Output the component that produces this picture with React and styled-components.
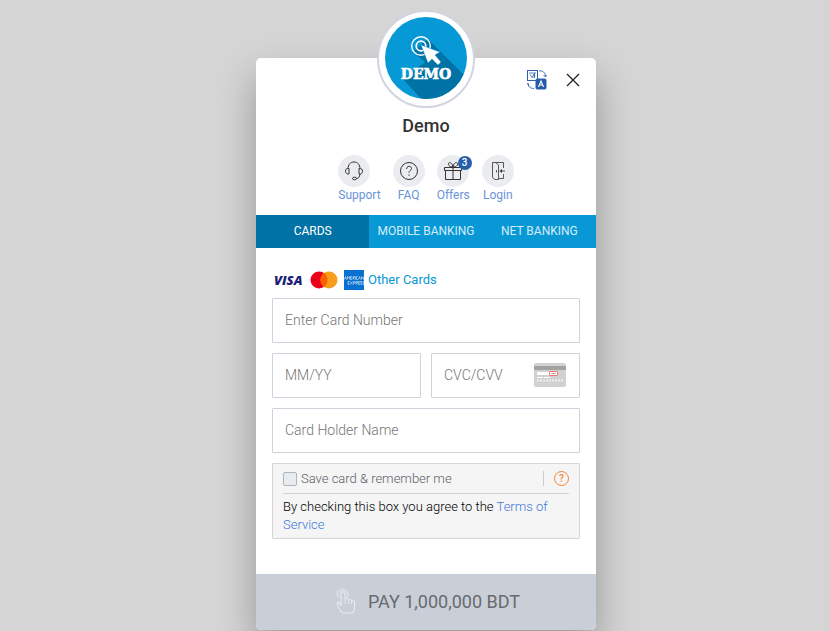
import React from 'react';
import styled, { createGlobalStyle } from 'styled-components';

const GlobalStyle = createGlobalStyle`
  *, *::before, *::after { box-sizing: border-box; }
  html { background: #d5d5d5; }
  body {
    margin: 0;
    font-family: Roboto, "Liberation Sans", sans-serif;
    font-size: 13px;
    color: #333;
    overflow-x: hidden;
  }
  button, input { font-family: inherit; }
`;

const Page = styled.main`
  display: flex;
  justify-content: center;
  padding: 58px 0 1px 22px;
`;

const Card = styled.form`
  position: relative;
  width: 100%;
  max-width: 340px;
  height: fit-content;
  background: #fff;
  border-radius: 5px;
  box-shadow: 0 19px 38px rgba(0, 0, 0, 0.3);
`;

const Brand = styled.div`
  position: absolute;
  top: -48px;
  left: 50%;
  transform: translateX(-50%);
  width: 98px;
  height: 98px;
  padding: 5px 6px;
  border: 2px solid #d1d5e0;
  border-radius: 50%;
  background: #fff;

  svg { display: block; }
`;

const Header = styled.header`
  display: flex;
  flex-direction: column;
  align-items: center;
  padding: 11px 12px 12px;
`;

const TopTools = styled.div`
  display: flex;
  align-self: stretch;
  justify-content: flex-end;
  gap: 14px;
`;

const ToolButton = styled.button`
  display: flex;
  width: 22px;
  height: 22px;
  padding: 0;
  align-items: center;
  justify-content: center;
  border: 0;
  background: none;
  color: #222;
  cursor: pointer;
`;

const Title = styled.h1`
  margin: 24px 0 18px;
  font-size: 18px;
  line-height: 22px;
  font-weight: 500;
`;

const Actions = styled.nav`
  display: flex;
  gap: 12px;
`;

const Action = styled.a`
  display: flex;
  flex-direction: column;
  align-items: ${(p) => (p.$start ? 'flex-start' : 'center')};
  color: #6a93d8;
  font-size: 12px;
  line-height: 16px;
  text-decoration: none;
`;

const ActionIcon = styled.span`
  position: relative;
  display: flex;
  width: 32px;
  height: 32px;
  align-items: center;
  justify-content: center;
  border-radius: 50%;
  background: #ebecf0;
  color: #333;
`;

const Badge = styled.span`
  position: absolute;
  top: 1px;
  right: -3px;
  width: 14px;
  height: 14px;
  border-radius: 50%;
  background: #275eaa;
  color: #fff;
  font-size: 10px;
  line-height: 14px;
  font-weight: 500;
  text-align: center;
`;

const Tabs = styled.div`
  display: grid;
  grid-template-columns: repeat(3, 1fr);
  background: #0798d5;
`;

const Tab = styled.button`
  height: 33px;
  padding: 0 0 2px;
  border: 0;
  background: ${(p) => (p.$active ? '#0072a5' : 'transparent')};
  color: ${(p) => (p.$active ? '#fff' : '#d4eefa')};
  font-size: 12px;
  white-space: nowrap;
  cursor: pointer;
`;

const Body = styled.div`
  display: flex;
  flex-direction: column;
  gap: 10px;
  padding: 22px 16px 35px;
`;

const CardTypes = styled.div`
  display: flex;
  align-items: center;
  height: 20px;
  margin-bottom: -2px;
  gap: 4px;
`;

const OtherCards = styled.a`
  padding-bottom: 2px;
  color: #0798d5;
  text-decoration: none;
`;

const FieldRow = styled.div`
  display: grid;
  grid-template-columns: repeat(2, minmax(0, 1fr));
  gap: 10px;
`;

const Field = styled.label`
  display: flex;
  align-items: center;
  height: 45px;
  padding: 0 12px 2px;
  border: 1px solid #ced2da;
  border-radius: 1px;
  background: #fff;

  svg { flex: none; }
`;

const Input = styled.input`
  flex: 1;
  min-width: 0;
  padding: 0;
  border: 0;
  outline: 0;
  background: transparent;
  color: #333;
  font-size: 14px;
  font-weight: 300;

  &::placeholder { color: #757575; opacity: 1; }
`;

const Consent = styled.section`
  padding: 0 10px 4px;
  border: 1px solid #d5d5d5;
  border-radius: 1px;
  background: #f5f5f5;
  font-weight: 300;
`;

const SaveRow = styled.div`
  display: flex;
  align-items: center;
  height: 30px;
  border-bottom: 1px solid #d2d2d2;
`;

const SaveLabel = styled.label`
  display: flex;
  flex: 1;
  align-items: center;
  gap: 4px;
  color: #5a6268;
`;

const CheckBox = styled.input`
  appearance: none;
  width: 14px;
  height: 14px;
  margin: 0;
  border: 1px solid #adb5bd;
  border-radius: 2px;
  background: #e9ecef;

  &:checked { background: #0798d5; }
`;

const HelpWrap = styled.div`
  padding-left: 10px;
  border-left: 1px solid #ccc;
`;

const HelpButton = styled.button`
  display: block;
  width: 15px;
  height: 15px;
  padding: 0;
  border: 1px solid #f58634;
  border-radius: 50%;
  background: none;
  color: #f58634;
  font-size: 10px;
  line-height: 13px;
  font-weight: 500;
  text-align: center;
  cursor: pointer;
`;

const Terms = styled.p`
  margin: 4px 0 0;
  color: #000;
  line-height: 18px;

  a { color: #3f78d8; text-decoration: none; }
`;

const PayButton = styled.button`
  display: flex;
  width: 100%;
  height: 56px;
  align-items: center;
  justify-content: center;
  gap: 12px;
  padding: 0 0 2px 4px;
  border: 0;
  border-radius: 0 0 5px 5px;
  background: #cacfd7;
  color: #666b70;
  font-size: 18px;
  cursor: pointer;
`;

function DemoLogo() {
  return (
    <svg width="82" height="82" viewBox="0 0 82 82" role="img" aria-label="Demo">
      <defs>
        <clipPath id="disc"><circle cx="41" cy="41" r="41" /></clipPath>
      </defs>
      <g clipPath="url(#disc)">
        <rect width="82" height="82" fill="#0799d6" />
        <path d="M43 22 98 77 60 108 18 62 40 45 28 35Z" fill="#0072a5" />
      </g>
      <g fill="none" stroke="#fff">
        <circle cx="36" cy="29" r="9.3" strokeWidth="1.4" />
        <circle cx="36" cy="29" r="4.8" strokeWidth="1.7" />
      </g>
      <path d="M36 28 55 35 50 38 56 45 53 48 47 42 43 46Z" fill="#fff" stroke="#0799d6" strokeWidth="0.500" />
      <text x="41" y="62" fill="#fff" stroke="#fff" strokeWidth="0.600" textAnchor="middle" fontFamily="DejaVu Serif, serif" fontWeight="700" fontSize="14">DEMO</text>
    </svg>
  );
}

function TranslateIcon() {
  return (
    <svg width="20" height="20" viewBox="0 0 20 20" fill="none" stroke="#2d61ad">
      <rect x="0.500" y="0.500" width="10" height="10" />
      <path d="M2 3h7M3 4.500l2 3 1.500-2.500M6 4.500c3-.5 2 3 0 2.500M7.500 3v5" strokeWidth="0.800" />
      <path d="M12 1c4-.5 6 1.500 6.500 5m-2-1 2 2 1-2M1 13c0 3 2 5.500 6 5.500m-5-2L.5 13" strokeWidth="0.900" />
      <rect x="9" y="9" width="10" height="10" rx="1" fill="#205bab" />
      <path d="m11.500 17 2.500-6 2.500 6m-4-2h3" stroke="#fff" strokeWidth="1.100" />
    </svg>
  );
}

function CloseIcon() {
  return (
    <svg width="14" height="14" viewBox="0 0 14 14" stroke="currentColor" strokeWidth="1.300">
      <path d="m1 1 12 12M13 1 1 13" />
    </svg>
  );
}

const line = { width: 20, height: 20, viewBox: '0 0 20 20', fill: 'none', stroke: 'currentColor', strokeWidth: 1 };

function HeadsetIcon() {
  return (
    <svg {...line}>
      <path d="M4 8C4 3.500 6.500 1 10 1S16 3.500 16 8M5 7.500c-2.500-.5-3.500 1-3.500 2.800S3 13.500 5 13Zm10 0c2.500-.5 3.500 1 3.500 2.800S17 13.500 15 13ZM16 13c-.5 3-1.500 4.500-3.500 4.500" />
      <ellipse cx="10.500" cy="17.500" rx="2" ry="1.300" />
    </svg>
  );
}

function FaqIcon() {
  return (
    <svg {...line}>
      <circle cx="10" cy="10" r="8.500" />
      <path d="M7.500 8c0-3.500 5-3.500 5-.5 0 2-2.500 2-2.500 4.200" />
      <path d="M10 13.500v1.300" />
    </svg>
  );
}

function GiftIcon() {
  return (
    <svg {...line}>
      <path d="M1.500 6.500h17v3h-17ZM2.500 9.500v9h15v-9M10 6.500v12M10 6C7 6 5 4.500 5.500 2.500 6.500.5 9.500 2 10 6Zm0 0c3 0 5-1.500 4.500-3.500C13.500.5 10.500 2 10 6Z" />
    </svg>
  );
}

function LoginIcon() {
  return (
    <svg {...line} strokeWidth="0.800">
      <path d="M4.500 1.500h11V7m0 6v4.500H10.500M4.500 1.500v15l2.500 2h3.500V4L7.500 1.500M8.500 9v2.500" />
      <path d="M17 10h-4.500" />
      <path d="m14 8-2.500 2 2.500 2Z" fill="currentColor" stroke="none" />
    </svg>
  );
}

function VisaIcon() {
  return (
    <svg width="33" height="20" viewBox="0 0 33 20" role="img" aria-label="Visa">
      <text x="2" y="15" fill="#1c2177" fontFamily="Open Sans, sans-serif" fontSize="13" fontStyle="italic" fontWeight="800">VISA</text>
    </svg>
  );
}

function MastercardIcon() {
  return (
    <svg width="31" height="18" viewBox="0 0 31 18" role="img" aria-label="Mastercard">
      <circle cx="10" cy="9" r="8.500" fill="#eb001b" />
      <circle cx="20" cy="9" r="8.500" fill="#f79e1b" />
      <path d="M15 2.100a8.500 8.500 0 0 1 0 13.800 8.500 8.500 0 0 1 0-13.800Z" fill="#ff5f00" />
    </svg>
  );
}

function AmexIcon() {
  return (
    <svg width="20" height="20" viewBox="0 0 20 20" role="img" aria-label="American Express">
      <rect width="20" height="20" fill="#0870cf" />
      <g stroke="#d6e8f8" strokeWidth="0.600" fill="none">
        <path d="M.5 9.500 1.500 6.500 2.500 9.500M1 8.500h1M3.500 9.500v-3l1 1.500 1-1.500v3M8 6.500H6.500v3H8M6.500 8H8M9 9.500v-3h1.500V8H9l1.500 1.500M11.500 6.500v3M14 6.500h-1.500v3H14M14.500 9.500l1-3 1 3M17.500 9.500v-3l2 3v-3" />
        <path d="M5.500 11.500H4v3h1.500M4 13h1.500M6.500 11.500l2 3m0-3-2 3M9.500 14.500v-3H11V13H9.500M12 14.500v-3h1.500V13H12l1.500 1.500M16 11.500h-1.500v3H16m-1.500-1.500H16M18 11.500h-1.500V13H18v1.500h-1.500M20 11.500h-1V13h1v1.500h-1" />
      </g>
    </svg>
  );
}

function CvvIcon() {
  return (
    <svg width="33" height="24" viewBox="0 0 33 24" aria-hidden="true">
      <rect width="32" height="24" rx="2" fill="#d0d2d1" />
      <rect y="3" width="32" height="4" fill="#a2a2a1" />
      <rect x="3" y="9" width="13" height="3" fill="#fff" />
      <rect x="15.500" y="8.500" width="8" height="4" rx="0.500" fill="#fff" stroke="#ef7772" />
      <path d="M17.500 10.500h4" stroke="#777" strokeDasharray="1 .5" />
      <path d="M3 14.500h6m1 0h6" stroke="#fff" />
      <path d="M3 17.500h26" stroke="#eee" strokeWidth="2" strokeDasharray="2 1" />
    </svg>
  );
}

function TapIcon() {
  return (
    <svg width="20" height="26" viewBox="0 0 20 26" fill="none" stroke="#e8eaed" strokeWidth="1.100">
      <path d="M5 17 2.500 14.500c-1.500-.5-2 .8-1 2.500L4 22c1 2 2 3 4 3h6c3 0 4.500-2 4.500-4.500V14c0-2-3-2-3 0v-1c0-2-3-2-3 0v-1c0-2-3.500-2-3.500 0V6c0-2.700-4-2.700-4 0Z" />
      <path d="M9 12v4m3.500-3v3m3-2v2M3.500 8.500C1 5 3.500 2.800 7 2.800S12.500 6 10.500 8.500M2.500 10C-1 6 1.500 1 6.500 1S14 6 11 10" strokeWidth="0.800" />
    </svg>
  );
}

const ACTIONS = [
  { label: 'Support', icon: <HeadsetIcon />, start: true },
  { label: 'FAQ', icon: <FaqIcon /> },
  { label: 'Offers', icon: <GiftIcon />, badge: 3, start: true },
  { label: 'Login', icon: <LoginIcon /> },
];

const TABS = ['CARDS', 'MOBILE BANKING', 'NET BANKING'];

export default function App() {
  const [tab, setTab] = React.useState(TABS[0]);

  return (
    <>
      <GlobalStyle />
      <Page>
        <Card onSubmit={(e) => e.preventDefault()}>
          <Brand><DemoLogo /></Brand>
          <Header>
            <TopTools>
              <ToolButton type="button" aria-label="Change language"><TranslateIcon /></ToolButton>
              <ToolButton type="button" aria-label="Close"><CloseIcon /></ToolButton>
            </TopTools>
            <Title>Demo</Title>
            <Actions aria-label="Help and account">
              {ACTIONS.map((a) => (
                <Action key={a.label} href="#" $start={a.start}>
                  <ActionIcon>
                    {a.icon}
                    {a.badge && <Badge>{a.badge}</Badge>}
                  </ActionIcon>
                  {a.label}
                </Action>
              ))}
            </Actions>
          </Header>
          <Tabs role="tablist">
            {TABS.map((t) => (
              <Tab key={t} type="button" role="tab" aria-selected={t === tab} $active={t === tab} onClick={() => setTab(t)}>
                {t}
              </Tab>
            ))}
          </Tabs>
          <Body>
            <CardTypes>
              <VisaIcon />
              <MastercardIcon />
              <AmexIcon />
              <OtherCards href="#">Other Cards</OtherCards>
            </CardTypes>
            <Field><Input aria-label="Card number" placeholder="Enter Card Number" inputMode="numeric" /></Field>
            <FieldRow>
              <Field><Input aria-label="Expiry date" placeholder="MM/YY" /></Field>
              <Field><Input aria-label="Security code" placeholder="CVC/CVV" /><CvvIcon /></Field>
            </FieldRow>
            <Field><Input aria-label="Card holder name" placeholder="Card Holder Name" /></Field>
            <Consent>
              <SaveRow>
                <SaveLabel><CheckBox type="checkbox" />Save card &amp; remember me</SaveLabel>
                <HelpWrap><HelpButton type="button" aria-label="About saved cards">?</HelpButton></HelpWrap>
              </SaveRow>
              <Terms>By checking this box you agree to the <a href="#">Terms of Service</a></Terms>
            </Consent>
          </Body>
          <PayButton type="submit"><TapIcon />PAY 1,000,000 BDT</PayButton>
        </Card>
      </Page>
    </>
  );
}
